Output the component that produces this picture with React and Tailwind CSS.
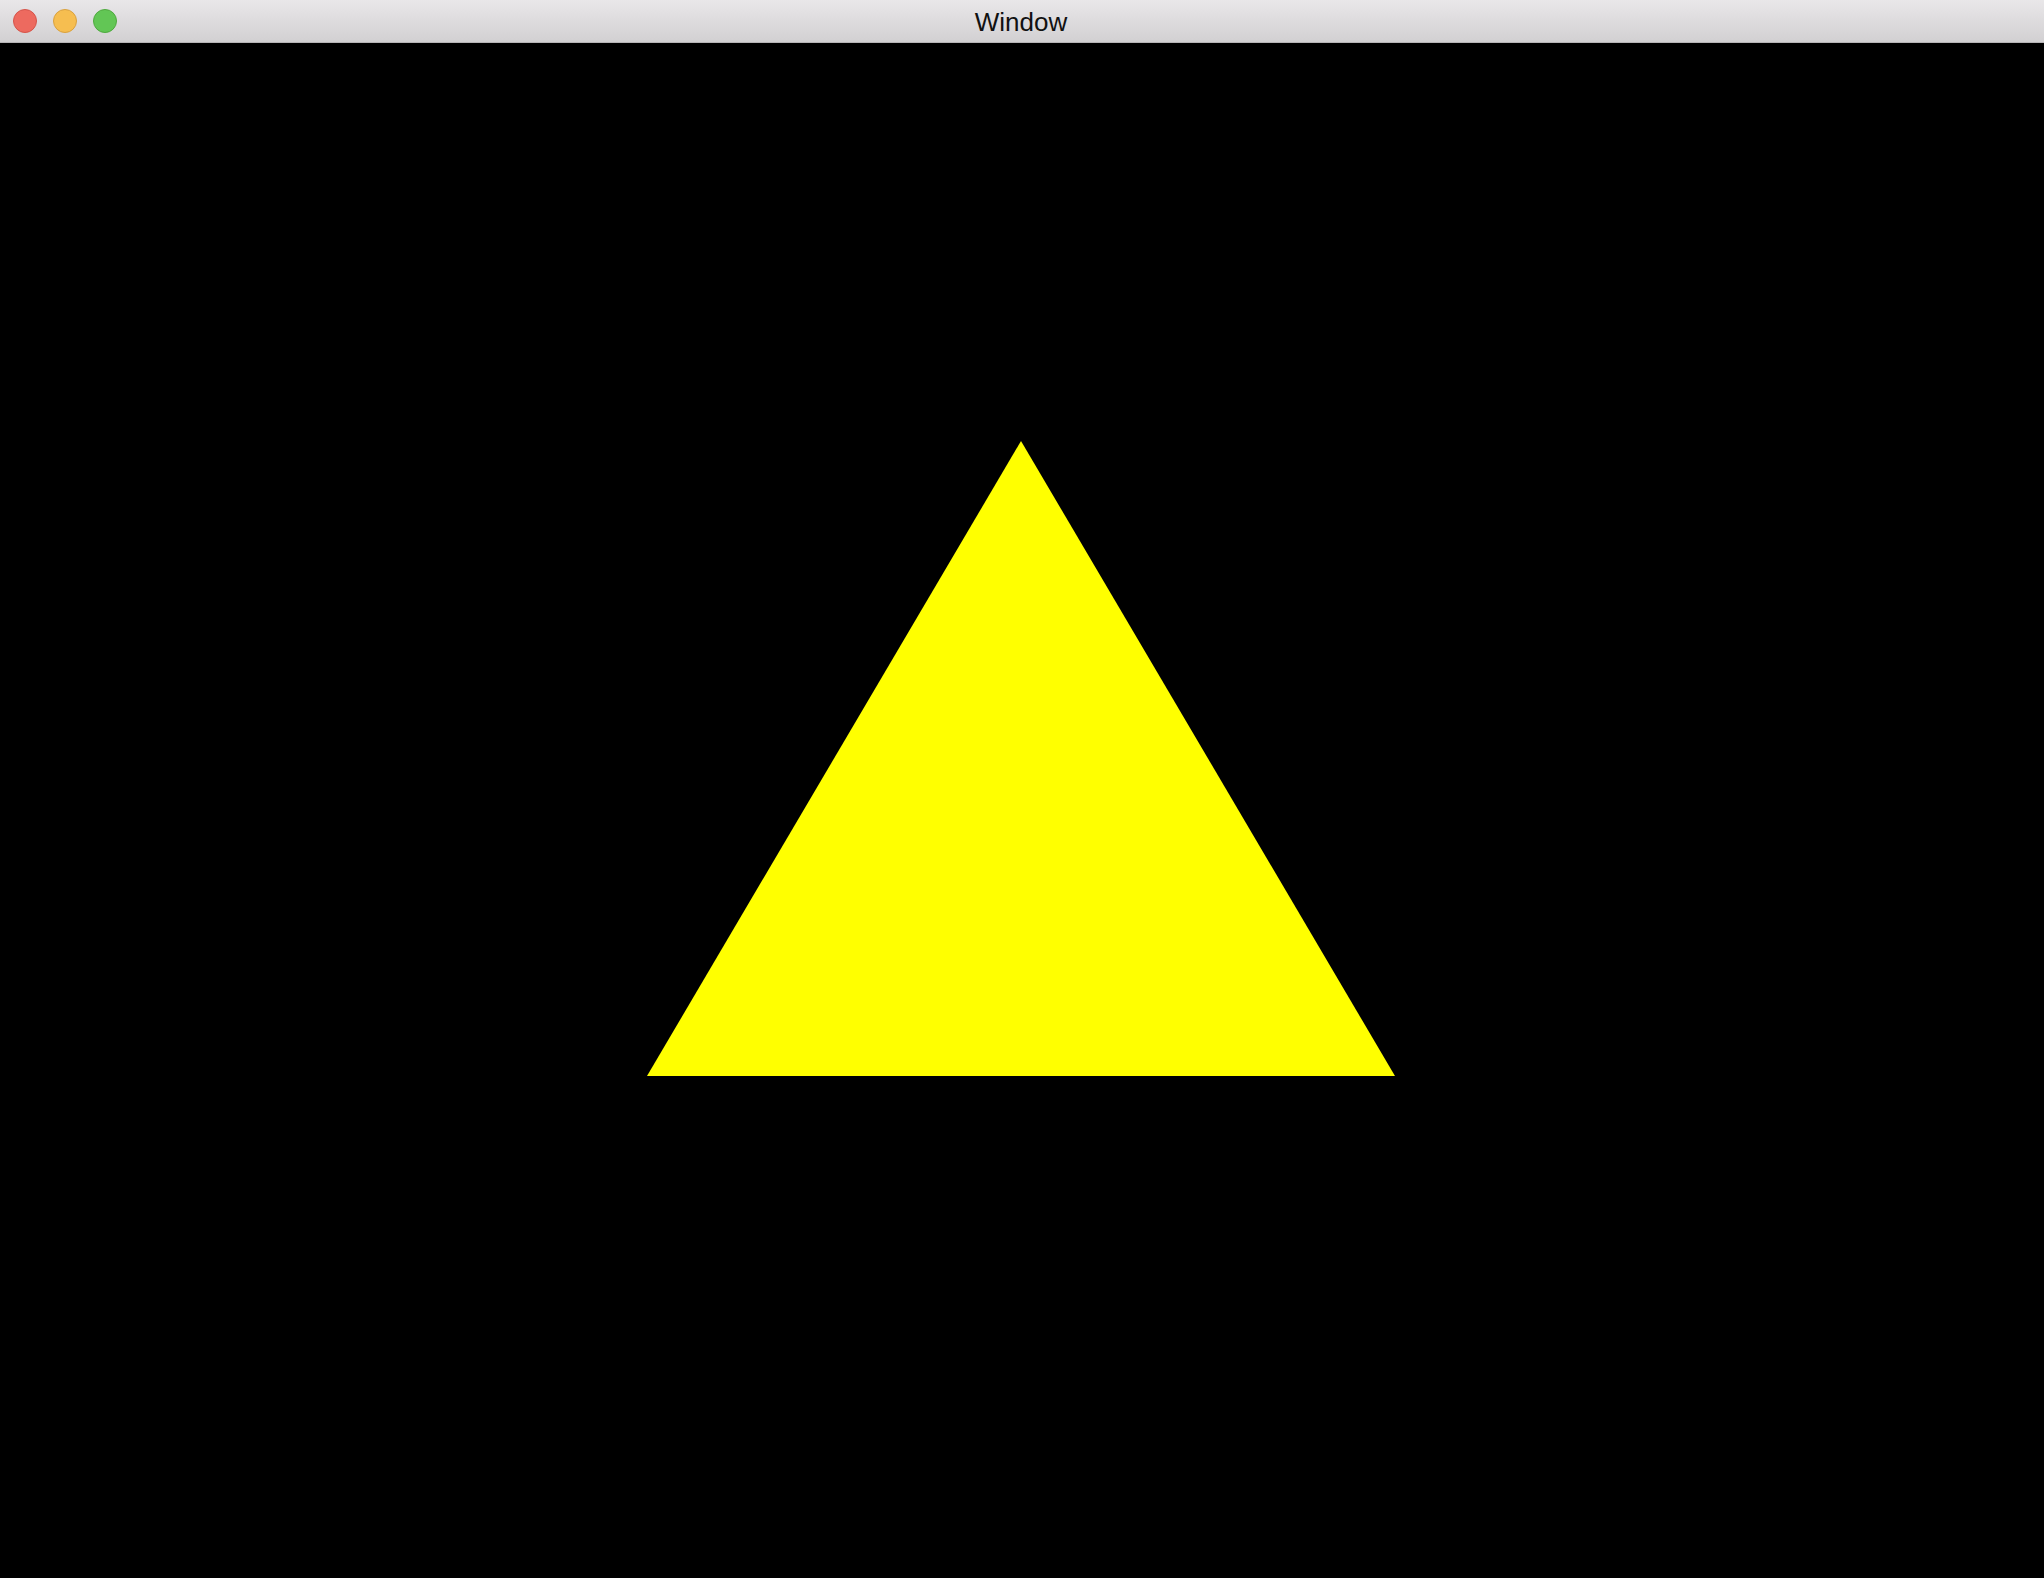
import React from 'react';

const TrafficLight = ({ className }) => (
    <span className={`block w-6 h-6 rounded-full border ${className}`} />
);

const App = () => {
    return (
        <div className="w-[2044px] h-[1578px] flex flex-col bg-black overflow-hidden">
            {/* Title bar */}
            <div className="relative h-[43px] shrink-0 flex items-center justify-center bg-gradient-to-b from-[#e9e7e9] to-[#d2d0d2] border-b border-[#b6b4b6]">
                <div className="absolute left-[13px] top-[9px] flex gap-4">
                    <TrafficLight className="bg-[#ed6a5f] border-[#d5544a]" />
                    <TrafficLight className="bg-[#f6be50] border-[#d9a13f]" />
                    <TrafficLight className="bg-[#62c655] border-[#4fa93f]" />
                </div>
                <span className="text-[26px] leading-none text-[#111111] font-['Liberation_Sans',Arial,sans-serif] mt-[1px] pr-[2px]">
                    Window
                </span>
            </div>

            {/* GL viewport */}
            <div className="flex-1">
                <svg width="2044" height="1535" viewBox="0 0 2044 1535" className="block">
                    <polygon points="1021,398 1395,1033 647,1033" fill="#ffff00" />
                </svg>
            </div>
        </div>
    );
};

export default App;
